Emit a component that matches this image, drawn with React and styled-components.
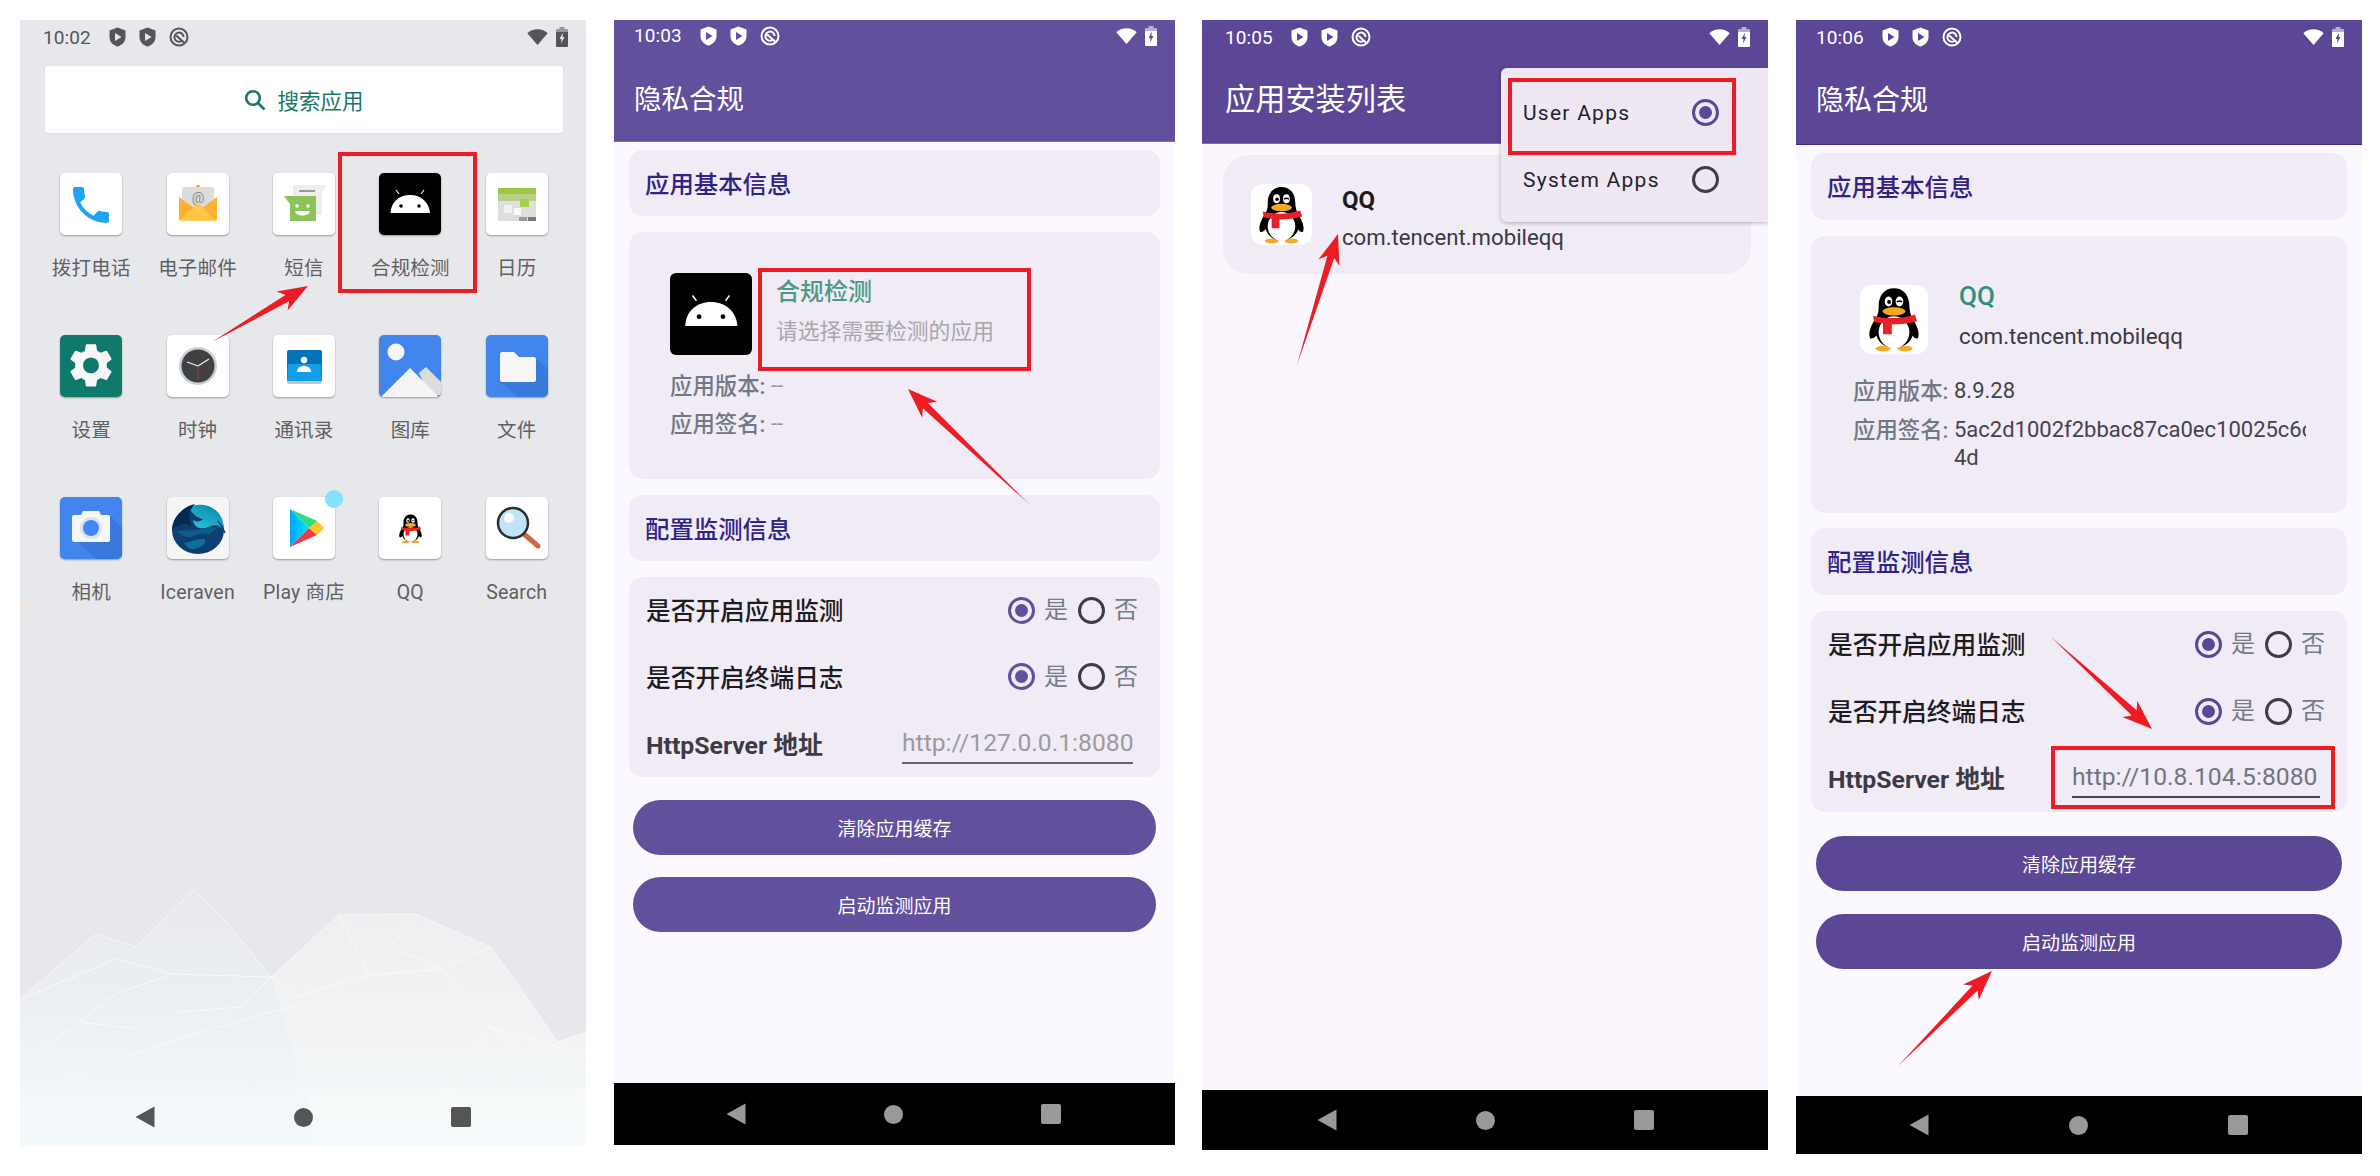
import React from "react";
import styled, { createGlobalStyle } from "styled-components";

const FONT = `Roboto, "Noto Sans CJK SC", sans-serif`;

const GlobalStyle = createGlobalStyle`
  html, body { margin: 0; padding: 0; background: #fff; }
  body { font-family: ${FONT}; }
`;

const Page = styled.div`
  position: relative;
  width: 2380px;
  height: 1176px;
  box-sizing: border-box;
  padding: 20px;
  display: flex;
  align-items: flex-start;
  overflow: hidden;
  background: #fff;
`;

const Phone = styled.div`
  position: relative;
  flex: none;
  width: ${(p) => p.$w}px;
  height: ${(p) => p.$h}px;
  margin-left: ${(p) => p.$gap || 0}px;
  background: ${(p) => p.$bg};
  display: flex;
  flex-direction: column;
  overflow: hidden;
`;

const Wallpaper = styled.svg`
  position: absolute;
  inset: 0;
`;

const Status = styled.div`
  position: relative;
  flex: none;
  height: ${(p) => p.$h}px;
  display: flex;
  align-items: center;
  padding: 0 18px 0 ${(p) => p.$left}px;
  color: ${(p) => p.$color};
`;

const Time = styled.span`
  font-size: 19px;
  letter-spacing: 0.1px;
  width: 66px;
`;

const StatusLeft = styled.div`
  display: flex;
  align-items: center;
  gap: 13px;
`;

const StatusRight = styled.div`
  margin-left: auto;
  display: flex;
  align-items: center;
  gap: 8px;
`;

const AppBar = styled.header`
  flex: none;
  height: ${(p) => p.$h}px;
  box-sizing: border-box;
  background: ${(p) => p.$bg};
  border-bottom: 1px solid ${(p) => p.$line};
  display: flex;
  flex-direction: column;
`;

const BarTitle = styled.div`
  flex: 1;
  display: flex;
  align-items: center;
  padding: ${(p) => p.$top}px 0 0 ${(p) => p.$left}px;
  color: #fff;
  font-size: ${(p) => p.$size}px;
  line-height: 1;
`;

const Body = styled.main`
  flex: 1;
  min-height: 0;
  display: flex;
  flex-direction: column;
  gap: ${(p) => p.$gap}px;
  padding: ${(p) => p.$top}px 15px 0;
  background: ${(p) => p.$bg};
`;

const Card = styled.section`
  flex: none;
  height: ${(p) => p.$h}px;
  box-sizing: border-box;
  background: #f0ebf5;
  border-radius: 14px;
`;

const HeadingCard = styled(Card)`
  display: flex;
  align-items: center;
  padding: 0 0 2px 16px;
  font-size: 24.4px;
  font-weight: 500;
  color: #2f2486;
`;

const InfoCard = styled(Card)`
  padding: ${(p) => p.$top}px 20px 0 ${(p) => p.$left}px;
`;

const AppRow = styled.div`
  display: flex;
  gap: ${(p) => p.$gap}px;
  margin-left: ${(p) => p.$inset}px;
`;

const AppIconBox = styled.div`
  flex: none;
  width: ${(p) => p.$w}px;
  height: ${(p) => p.$h}px;
  border-radius: ${(p) => p.$r || 8}px;
  overflow: hidden;
  background: ${(p) => p.$bg};
`;

const AppText = styled.div`
  display: flex;
  flex-direction: column;
  margin-top: ${(p) => p.$shift}px;
`;

const AppName = styled.div`
  height: 40px;
  display: flex;
  align-items: center;
  font-size: ${(p) => p.$size}px;
  font-weight: 500;
  color: ${(p) => p.$color};
`;

const AppSub = styled.div`
  height: 40px;
  display: flex;
  align-items: center;
  font-size: ${(p) => p.$size}px;
  color: ${(p) => p.$color};
`;

const MetaList = styled.div`
  display: flex;
  flex-direction: column;
  gap: ${(p) => p.$gap}px;
  margin-top: ${(p) => p.$top}px;
`;

const MetaRow = styled.div`
  display: flex;
  font-size: 22.4px;
  line-height: ${(p) => p.$line}px;
`;

const MetaLabel = styled.span`
  flex: none;
  width: ${(p) => p.$w}px;
  color: #6f7884;
  font-weight: 500;
`;

const MetaValue = styled.div`
  width: 352px;
  color: ${(p) => p.$color};
  font-size: 22px;
  overflow: hidden;
  white-space: nowrap;
`;

const Settings = styled(Card)`
  display: grid;
  grid-template-rows: repeat(3, 1fr);
  padding: 0 22px 0 17px;
`;

const SettingRow = styled.div`
  display: flex;
  align-items: center;
  justify-content: space-between;
`;

const SettingLabel = styled.span`
  padding-bottom: 2px;
  font-size: 24.7px;
  font-weight: 500;
  color: #1d1b20;
`;

const HttpLabel = styled.span`
  padding-bottom: 2px;
  font-size: 24.8px;
  font-weight: 700;
  color: #3d3a44;
`;

const RadioGroup = styled.div`
  display: flex;
  align-items: center;
`;

const Radio = styled.span`
  flex: none;
  width: 27px;
  height: 27px;
  box-sizing: border-box;
  border-radius: 50%;
  border: 3px solid ${(p) => (p.$on ? p.$tint : "#403c46")};
  display: flex;
  align-items: center;
  justify-content: center;
  &::after {
    content: "";
    width: 13px;
    height: 13px;
    border-radius: 50%;
    background: ${(p) => (p.$on ? p.$tint : "transparent")};
  }
`;

const RadioText = styled.span`
  font-size: 24px;
  line-height: 1;
  margin: 0 9.5px;
  color: #747c86;
  &:last-child { margin-right: 0; }
`;

const UrlField = styled.div`
  width: ${(p) => p.$w}px;
  height: 40px;
  margin-right: 5px;
  box-sizing: border-box;
  border-bottom: 2px solid ${(p) => p.$line};
  color: ${(p) => p.$color};
  font-size: 24.7px;
  line-height: 38px;
  white-space: nowrap;
`;

const Pill = styled.button`
  flex: none;
  height: 55px;
  margin: ${(p) => p.$top}px ${(p) => p.$inset}px 0;
  border: 0;
  border-radius: 28px;
  background: ${(p) => p.$bg};
  color: #fff;
  font-family: ${FONT};
  font-size: 19px;
`;

const NavBar = styled.nav`
  position: relative;
  flex: none;
  margin-top: auto;
  height: ${(p) => p.$h}px;
  box-sizing: border-box;
  padding: ${(p) => p.$pad};
  display: flex;
  align-items: center;
  justify-content: space-between;
  background: ${(p) => p.$bg};
`;

const NavDot = styled.span`
  width: 19px;
  height: 19px;
  border-radius: 50%;
  background: ${(p) => p.$color};
`;

const NavSquare = styled.span`
  width: 20px;
  height: 20px;
  border-radius: 2px;
  background: ${(p) => p.$color};
`;

/* launcher */
const SearchBar = styled.div`
  position: relative;
  flex: none;
  height: 67px;
  margin: 12px 23px 0 25px;
  border-radius: 2px;
  background: #fff;
  box-shadow: 0 0 1px rgba(0, 0, 0, 0.25);
  display: flex;
  align-items: center;
  justify-content: center;
  gap: 11px;
  color: #18796a;
  font-size: 21.5px;
`;

const AppGrid = styled.div`
  position: relative;
  margin: 40px 0 0 18px;
  display: grid;
  grid-template-columns: repeat(5, 106.4px);
  grid-auto-rows: 162px;
`;

const Launcher = styled.div`
  position: relative;
  display: flex;
  flex-direction: column;
  align-items: center;
`;

const Tile = styled.div`
  width: 62px;
  height: 62px;
  border-radius: 5px;
  overflow: hidden;
  background: ${(p) => p.$bg || "#fff"};
  box-shadow: 0 1px 2px rgba(0, 0, 0, 0.35);
`;

const TileLabel = styled.div`
  margin-top: 20px;
  font-size: 19.5px;
  letter-spacing: 0.2px;
  line-height: 28px;
  color: #5f6062;
  white-space: nowrap;
`;

const Badge = styled.span`
  position: absolute;
  top: -7px;
  right: 14px;
  width: 18px;
  height: 18px;
  border-radius: 50%;
  background: #85e1fb;
`;

/* installed apps screen */
const ListCard = styled.div`
  margin: 11px 17px 0 21px;
  height: 119px;
  box-sizing: border-box;
  border-radius: 26px;
  background: #f0ebf5;
  display: flex;
  align-items: flex-start;
  gap: 30px;
  padding: 29px 0 0 28px;
`;

const ListText = styled.div`
  display: flex;
  flex-direction: column;
`;

const ListName = styled.div`
  height: 32px;
  line-height: 32px;
  font-size: 24px;
  font-weight: 700;
  color: #1d1b20;
`;

const ListPackage = styled.div`
  margin-top: 3px;
  line-height: 36px;
  font-size: 22.2px;
  color: #3a3840;
`;

const Menu = styled.div`
  position: absolute;
  top: 48px;
  right: 0;
  width: 267px;
  height: 154px;
  box-sizing: border-box;
  padding: 11px 0 0 22px;
  border-radius: 6px 0 0 6px;
  background: #efe8f3;
  box-shadow: 0 1px 4px rgba(0, 0, 0, 0.28);
`;

const MenuItem = styled.div`
  height: 67px;
  display: flex;
  align-items: center;
  font-size: 21px;
  letter-spacing: 1.25px;
  color: #25232a;
`;

const MenuRadio = styled(Radio)`
  position: absolute;
  left: 191px;
`;

/* annotations */
const RedBox = styled.div`
  position: absolute;
  left: ${(p) => p.$x}px;
  top: ${(p) => p.$y}px;
  width: ${(p) => p.$w}px;
  height: ${(p) => p.$h}px;
  box-sizing: border-box;
  border: 4px solid #ed1c24;
`;

const ArrowLayer = styled.svg`
  position: absolute;
  inset: 0;
  pointer-events: none;
`;

function arrowPoints([tx, ty], [hx, hy]) {
  const len = Math.hypot(hx - tx, hy - ty);
  const ux = (hx - tx) / len;
  const uy = (hy - ty) / len;
  const nx = -uy;
  const ny = ux;
  const at = (back, side) => `${hx - ux * back + nx * side},${hy - uy * back + ny * side}`;
  return [
    `${tx},${ty}`,
    at(24, 3.6),
    at(30, 11),
    `${hx},${hy}`,
    at(30, -11),
    at(24, -3.6),
  ].join(" ");
}

const arrows = [
  [[212, 342], [308, 286]],
  [[1030, 505], [908, 389]],
  [[1297, 365], [1338, 234]],
  [[2051, 637], [2152, 729]],
  [[1898, 1066], [1992, 971]],
];

const ShieldIcon = ({ c }) => (
  <svg width="17" height="20" viewBox="0 0 17 20">
    <path
      fillRule="evenodd"
      fill={c}
      d="M8.5 0.5 16.5 3.5V10c0 4.6-3.3 8.2-8 9.5C3.8 18.2.5 14.6.5 10V3.5zM6 6v8l6.5-4z"
    />
  </svg>
);

const RingIcon = ({ c }) => (
  <svg width="20" height="20" viewBox="0 0 20 20" fill="none" stroke={c} strokeWidth="2">
    <circle cx="10" cy="10" r="8.5" />
    <path d="M13.5 13.2A4.6 4.6 0 1 1 14.6 10M7.2 8.6 15 15.6" />
  </svg>
);

const WifiIcon = ({ c }) => (
  <svg width="21" height="16" viewBox="0 0 21 16">
    <path fill={c} d="M10.5 16 .3 4.2C3 1.7 6.5.3 10.5.3s7.5 1.4 10.2 3.9z" />
  </svg>
);

const BatteryIcon = ({ c, cut }) => (
  <svg width="12" height="20" viewBox="0 0 12 20">
    <path fill={c} opacity="0.55" d="M3.5 0h5v2H11a1 1 0 0 1 1 1v3H0V3a1 1 0 0 1 1-1h2.5z" />
    <path fill={c} d="M0 5h12v14a1 1 0 0 1-1 1H1a1 1 0 0 1-1-1z" />
    <path fill={cut} d="M7 5.5 3.5 12H5.5L5 16.5l3.500-6.500H6.500z" />
  </svg>
);

const StatusBar = ({ time, color, cut, h, left }) => (
  <Status $h={h} $color={color} $left={left}>
    <Time>{time}</Time>
    <StatusLeft>
      <ShieldIcon c={color} />
      <ShieldIcon c={color} />
      <RingIcon c={color} />
    </StatusLeft>
    <StatusRight>
      <WifiIcon c={color} />
      <BatteryIcon c={color} cut={cut} />
    </StatusRight>
  </Status>
);

const Navigation = ({ h, bg, color, pad }) => (
  <NavBar $h={h} $bg={bg} $pad={pad}>
    <svg width="20" height="22" viewBox="0 0 20 22">
      <path fill={color} d="M19.5.5V21.5L.5 11z" />
    </svg>
    <NavDot $color={color} />
    <NavSquare $color={color} />
  </NavBar>
);

const AndroidArt = () => (
  <svg width="100%" height="100%" viewBox="0 0 62 60">
    <path d="M20 20 17 16M42 20 45 16" stroke="#fff" strokeWidth="1.1" />
    <path fill="#fff" d="M11.5 39C12 28 20 21 31 21s19 7 20 18z" />
    <circle cx="22" cy="32" r="1.8" fill="#000" />
    <circle cx="40" cy="32" r="1.8" fill="#000" />
  </svg>
);

const PenguinArt = ({ size = 62 }) => (
  <svg width={size} height={size} viewBox="0 0 62 62">
    <ellipse cx="21" cy="58" rx="7" ry="2.5" fill="#f7a823" />
    <ellipse cx="41" cy="58" rx="7" ry="2.5" fill="#f7a823" />
    <path
      fill="#000"
      d="M31 3c9 0 14 7 14 16 0 4 1 7 2 10 3 5 8 13 6 19-1 2-4 0-5-2-2 7-9 11-17 11s-14-4-16-11c-2 2-5 4-6 2-2-6 3-14 6-19 2-3 2-6 2-10 0-9 5-16 14-16z"
    />
    <ellipse cx="31" cy="43" rx="14" ry="14.5" fill="#fff" />
    <ellipse cx="26" cy="15" rx="3.5" ry="4.5" fill="#fff" />
    <ellipse cx="36" cy="15" rx="3.5" ry="4.5" fill="#fff" />
    <circle cx="26.5" cy="15.5" r="1.8" fill="#000" />
    <path d="M33.5 15.5q2.5-2 5 0" stroke="#000" strokeWidth="1.3" fill="none" />
    <ellipse cx="31" cy="24" rx="10.5" ry="3.8" fill="#f7a823" />
    <path fill="#e8202a" d="M12 28c10 3 28 3 38-1l2 6c-7 2-15 3-23 3v9h-8V35l-8-1z" />
  </svg>
);

const PhoneArt = () => (
  <svg width="62" height="62" viewBox="0 0 62 62">
    <g transform="translate(7 8) scale(2)">
      <path
        fill="#1ea4f2"
        d="M6.62 10.79c1.44 2.83 3.76 5.14 6.59 6.59l2.2-2.2c.27-.27.67-.36 1.02-.24 1.12.37 2.33.57 3.57.57.55 0 1 .45 1 1V20c0 .55-.45 1-1 1-9.39 0-17-7.61-17-17 0-.55.45-1 1-1h3.5c.55 0 1 .45 1 1 0 1.25.2 2.45.57 3.57.11.35.03.74-.25 1.02l-2.2 2.2z"
      />
    </g>
  </svg>
);

const MailArt = () => (
  <svg width="62" height="62" viewBox="0 0 62 62">
    <circle cx="31" cy="14" r="2" fill="#f59a23" />
    <rect x="15" y="14" width="32" height="22" rx="2" fill="#dcdcdc" />
    <text x="31" y="30" textAnchor="middle" fontSize="14" fill="#8a8a8a" fontFamily="Roboto">@</text>
    <path fill="#ffb02e" d="M12 24 31 38 50 24V47H12z" />
    <path fill="#ffc84d" d="M12 48 31 30 50 48z" opacity="0.9" />
  </svg>
);

const MessageArt = () => (
  <svg width="62" height="62" viewBox="0 0 62 62">
    <path fill="#ededed" d="M20 12H53L49 21V42H20z" />
    <rect x="26" y="17" width="16" height="2" fill="#9a9a9a" />
    <path fill="#8bc25a" d="M11 23H43V48H17V31z" />
    <circle cx="24" cy="33" r="1.8" fill="#fff" />
    <circle cx="35" cy="33" r="1.8" fill="#fff" />
    <path fill="#fff" d="M22 38H37C36 44 23 44 22 38z" />
  </svg>
);

const CalendarArt = () => (
  <svg width="62" height="62" viewBox="0 0 62 62">
    <rect x="12" y="15" width="38" height="33" fill="#dcdfdc" />
    <rect x="12" y="15" width="38" height="6" fill="#9cc73e" />
    <rect x="12" y="21" width="38" height="7" fill="#b9cf8a" />
    <rect x="18" y="32" width="8" height="8" fill="#f2f2f2" />
    <rect x="28" y="35" width="7" height="7" fill="#fafafa" />
    <rect x="34" y="26" width="9" height="8" fill="#a4cf4e" />
    <rect x="42" y="44" width="8" height="4" fill="#777" />
    <rect x="33" y="44" width="8" height="4" fill="#999" />
  </svg>
);

const GearArt = () => (
  <svg width="62" height="62" viewBox="0 0 62 62">
    <g transform="translate(4.6 4) scale(2.2)">
      <path
        fill="#f7f7f7"
        d="M19.14 12.94c.04-.3.06-.61.06-.94 0-.32-.02-.64-.07-.94l2.03-1.58c.18-.14.23-.41.12-.61l-1.92-3.32c-.12-.22-.37-.29-.59-.22l-2.39.96c-.5-.38-1.03-.7-1.62-.94l-.36-2.54c-.04-.24-.24-.41-.48-.41h-3.84c-.24 0-.43.17-.47.41l-.36 2.54c-.59.24-1.13.57-1.62.94l-2.39-.96c-.22-.08-.47 0-.59.22L2.74 8.87c-.12.21-.08.47.12.61l2.03 1.58c-.05.3-.09.63-.09.94s.02.64.07.94l-2.03 1.58c-.18.14-.23.41-.12.61l1.92 3.32c.12.22.37.29.59.22l2.39-.96c.5.38 1.03.7 1.62.94l.36 2.54c.05.24.24.41.48.41h3.84c.24 0 .44-.17.47-.41l.36-2.54c.59-.24 1.13-.56 1.62-.94l2.39.96c.22.08.47 0 .59-.22l1.92-3.32c.12-.22.07-.47-.12-.61l-2.01-1.58zM12 15.6c-1.98 0-3.6-1.62-3.6-3.6s1.62-3.6 3.6-3.6 3.6 1.62 3.6 3.6-1.62 3.6-3.6 3.6z"
      />
    </g>
  </svg>
);

const ClockArt = () => (
  <svg width="62" height="62" viewBox="0 0 62 62">
    <circle cx="31" cy="31" r="19" fill="#c9d0d6" />
    <circle cx="31" cy="31" r="16.5" fill="#3f4143" />
    <path d="M31 31 20 27M31 31 42 24" stroke="#f2f2f2" strokeWidth="1.2" />
    <path d="M31 31V45" stroke="#d33" strokeWidth="0.8" />
  </svg>
);

const ContactsArt = () => (
  <svg width="62" height="62" viewBox="0 0 62 62">
    <rect x="14" y="16" width="35" height="33" rx="2" fill="#9e9e9e" opacity="0.6" />
    <rect x="14" y="15" width="35" height="31" rx="2" fill="#0273bb" />
    <path fill="#119fe8" d="M15 29H48L49 46H14z" />
    <circle cx="31" cy="25" r="3.2" fill="#fff" />
    <path fill="#fff" d="M24 37c0-4 3-6 7-6s7 2 7 6z" />
  </svg>
);

const GalleryArt = () => (
  <svg width="62" height="62" viewBox="0 0 62 62">
    <path fill="#dcdcdc" d="M40 38 47 32 62 47V60H50z" />
    <path fill="#f5f5f5" d="M2 62 31 33 60 62z" />
    <circle cx="17" cy="17" r="8.5" fill="#f5f5f5" />
  </svg>
);

const FolderArt = () => (
  <svg width="62" height="62" viewBox="0 0 62 62">
    <path fill="#356fd0" opacity="0.55" d="M50 23 62 34V62H32L13 46z" />
    <path fill="#f6f6f6" d="M14 19a2 2 0 0 1 2-2h12l5 5h15a2 2 0 0 1 2 2v21a2 2 0 0 1-2 2H16a2 2 0 0 1-2-2z" />
  </svg>
);

const CameraArt = () => (
  <svg width="62" height="62" viewBox="0 0 62 62">
    <path fill="#356fd0" opacity="0.55" d="M51 20 62 30V62H36L12 40z" />
    <path fill="#f6f6f6" d="M12 20a2 2 0 0 1 2-2h7l2-4h16l2 4h7a2 2 0 0 1 2 2v23a2 2 0 0 1-2 2H14a2 2 0 0 1-2-2z" />
    <circle cx="31" cy="31" r="11" fill="#dfe3e8" />
    <circle cx="31" cy="31" r="8" fill="#4285f4" />
  </svg>
);

const IceravenArt = () => (
  <svg width="62" height="62" viewBox="0 0 62 62">
    <defs>
      <linearGradient id="iceTeal" x1="0.2" y1="0.9" x2="0.8" y2="0">
        <stop offset="0" stopColor="#25c1d6" />
        <stop offset="1" stopColor="#0d83ad" />
      </linearGradient>
    </defs>
    <ellipse cx="31" cy="33" rx="26" ry="24" fill="#0c3f70" />
    <path fill="url(#iceTeal)" d="M22 11C30 5 46 7 53 18c3 5 4 9 3 14-4-4-9-5-14-2-8 3-15 1-16-7 3 2 7 2 10-1-5-1-11-5-14-11z" />
    <path fill="#115a8c" d="M10 34c9-1 19 0 29-3 4-1 8-1 11 1-4 1-6 3-7 6-6-3-13-1-18 2-6 1-11-1-15-6z" />
    <path fill="#0d6d9b" d="M17 46c7-1 14-5 21-4 2 6-8 11-14 10-3-1-5-3-7-6z" />
    <path fill="#052a52" d="M5 33C6 22 14 10 28 7 22 13 20 21 25 29 17 26 10 27 5 33z" />
    <path d="M54 27 58 36M51 24 55 30" stroke="#0c3f70" strokeWidth="1.4" />
  </svg>
);

const PlayArt = () => (
  <svg width="62" height="62" viewBox="0 0 62 62">
    <defs>
      <linearGradient id="playBlue" x1="0" y1="0" x2="1" y2="0">
        <stop offset="0" stopColor="#00a6ff" />
        <stop offset="1" stopColor="#00e3ff" />
      </linearGradient>
    </defs>
    <path fill="url(#playBlue)" d="M17 12V50L36 31z" />
    <path fill="#30dc80" d="M17 12 36 31 44 24z" />
    <path fill="#ee3a44" d="M17 50 36 31 44 38z" />
    <path fill="#ffc42a" d="M36 31 44 24 51 31 44 38z" />
  </svg>
);

const SearchArt = () => (
  <svg width="62" height="62" viewBox="0 0 62 62">
    <path d="M38 37 52 49" stroke="#c96a42" strokeWidth="5" strokeLinecap="round" />
    <circle cx="27" cy="26" r="15" fill="#bfe4f8" stroke="#2c2c2c" strokeWidth="2.5" />
    <circle cx="23" cy="21" r="5" fill="#f4fbff" />
  </svg>
);

const QqTileArt = () => (
  <svg width="62" height="62" viewBox="0 0 62 62">
    <g transform="translate(16 16) scale(0.5)">
      <PenguinArt />
    </g>
  </svg>
);

const launcherApps = [
  { label: "拨打电话", art: <PhoneArt /> },
  { label: "电子邮件", art: <MailArt /> },
  { label: "短信", art: <MessageArt /> },
  { label: "合规检测", art: <AndroidArt />, bg: "#000" },
  { label: "日历", art: <CalendarArt /> },
  { label: "设置", art: <GearArt />, bg: "#0f7a6c" },
  { label: "时钟", art: <ClockArt /> },
  { label: "通讯录", art: <ContactsArt /> },
  { label: "图库", art: <GalleryArt />, bg: "#4285ec" },
  { label: "文件", art: <FolderArt />, bg: "#4285ec" },
  { label: "相机", art: <CameraArt />, bg: "#4285ec" },
  { label: "Iceraven", art: <IceravenArt />, bg: "#f5f5f5" },
  { label: "Play 商店", art: <PlayArt />, badge: true },
  { label: "QQ", art: <QqTileArt /> },
  { label: "Search", art: <SearchArt /> },
];

const sparks = [
  [5, 586, 6], [39, 548, 3], [200, 561, 4], [201, 596, 2], [12, 636, 3], [145, 626, 3],
  [170, 636, 2.5], [92, 652, 2.5], [66, 685, 2], [288, 667, 3], [293, 690, 2], [381, 610, 2],
  [497, 635, 2.5], [463, 584, 2.5], [544, 558, 2.5], [531, 508, 2], [350, 563, 2], [280, 544, 2],
  [28, 397, 5], [233, 322, 3],
];

const LauncherScreen = () => (
  <Phone $w={566} $h={1126} $bg="#e7e8eb">
    <Wallpaper width="566" height="1126" viewBox="0 0 566 1126">
      <defs>
        <linearGradient id="ridge" gradientUnits="userSpaceOnUse" x1="0" y1="870" x2="0" y2="1126">
          <stop offset="0" stopColor="#e8e9ec" />
          <stop offset="0.35" stopColor="#ebeef1" />
          <stop offset="0.7" stopColor="#eff4f7" />
          <stop offset="1" stopColor="#f1f8fb" />
        </linearGradient>
        <linearGradient id="warm" gradientUnits="userSpaceOnUse" x1="0" y1="895" x2="0" y2="1126">
          <stop offset="0" stopColor="#eeeff0" />
          <stop offset="0.6" stopColor="#f2f4f5" />
          <stop offset="1" stopColor="#f5fafc" />
        </linearGradient>
      </defs>
      {sparks.map(([x, y, r]) => (
        <circle key={`${x}-${y}`} cx={x} cy={y} r={r} fill="#f1e6dd" opacity="0.6" />
      ))}
      <path fill="url(#ridge)" d="M0 979 76 914 116 927 173 870 204 899 251 957 319 895 395 894 471 927 538 1022 566 1012V1126H0z" />
      <path fill="url(#warm)" d="M251 957 319 895 395 894 471 927 538 1022 566 1012V1126H300z" />
      <path
        fill="none"
        stroke="#fff"
        strokeWidth="1"
        opacity="0.6"
        d="M0 979 76 914 116 927 173 870 204 899 251 957 319 895 395 894 471 927 538 1022 566 1012M0 979 97 939 152 954 251 957 278 976 349 955 422 949 471 927M0 1044 60 1002 96 974 152 954M60 1002 119 1009M22 1036 52 1057 155 1020 220 1001 280 984M251 957 220 987 159 992M395 894 349 955M319 895 349 955M375 929 422 949 469 1007 538 1027 566 1034M469 1007 435 1067 390 1100M469 1007 566 1071"
      />
      <rect x="0" y="1069" width="566" height="57" fill="#fff" opacity="0.25" />
    </Wallpaper>
    <StatusBar time="10:02" color="#555559" cut="#e7e8eb" h={34} left={23} />
    <SearchBar>
      <svg width="22" height="22" viewBox="0 0 22 22" fill="none" stroke="#18796a" strokeWidth="2.6">
        <circle cx="9" cy="9" r="6.8" />
        <path d="M14 14 20.5 20.5" />
      </svg>
      搜索应用
    </SearchBar>
    <AppGrid>
      {launcherApps.map((app) => (
        <Launcher key={app.label}>
          <Tile $bg={app.bg}>{app.art}</Tile>
          {app.badge && <Badge />}
          <TileLabel>{app.label}</TileLabel>
        </Launcher>
      ))}
    </AppGrid>
    <Navigation h={58} bg="transparent" color="#555" pad="0 115px" />
  </Phone>
);

const ComplianceScreen = ({ m, time, name, sub, version, sign, url, nameColor, subColor, valueColor, art, iconBg }) => (
  <Phone $w={m.w} $h={m.h} $gap={m.gap} $bg={m.bodyBg}>
    <AppBar $h={m.bar} $bg={m.tint} $line={m.line}>
      <StatusBar time={time} color="#fff" cut={m.tint} h={m.status} left={20} />
      <BarTitle $top={m.titleTop} $left={m.titleLeft} $size={m.titleSize}>隐私合规</BarTitle>
    </AppBar>
    <Body $gap={m.cardGap} $top={m.bodyTop} $bg={m.bodyBg}>
      <HeadingCard $h={m.heading}>应用基本信息</HeadingCard>
      <InfoCard $h={m.info} $top={m.infoTop} $left={m.infoLeft}>
        <AppRow $gap={m.iconGap} $inset={m.iconInset}>
          <AppIconBox $w={m.iconW} $h={m.iconH} $bg={iconBg} $r={m.iconR}>{art}</AppIconBox>
          <AppText $shift={m.textShift}>
            <AppName $size={m.nameSize} $color={nameColor}>{name}</AppName>
            <AppSub $size={m.subSize} $color={subColor}>{sub}</AppSub>
          </AppText>
        </AppRow>
        <MetaList $top={m.metaTop} $gap={m.signGap}>
          <MetaRow $line={38}>
            <MetaLabel $w={m.metaW}>应用版本:</MetaLabel>
            <MetaValue $color={valueColor}>{version}</MetaValue>
          </MetaRow>
          <MetaRow $line={m.signLine}>
            <MetaLabel $w={m.metaW}>应用签名:</MetaLabel>
            <MetaValue $color={valueColor}>
              {sign.map((part) => (
                <div key={part}>{part}</div>
              ))}
            </MetaValue>
          </MetaRow>
        </MetaList>
      </InfoCard>
      <HeadingCard $h={m.heading}>配置监测信息</HeadingCard>
      <Settings $h={m.settings}>
        {["是否开启应用监测", "是否开启终端日志"].map((label) => (
          <SettingRow key={label}>
            <SettingLabel>{label}</SettingLabel>
            <RadioGroup>
              <Radio $on $tint={m.tint} />
              <RadioText>是</RadioText>
              <Radio />
              <RadioText>否</RadioText>
            </RadioGroup>
          </SettingRow>
        ))}
        <SettingRow>
          <HttpLabel>HttpServer 地址</HttpLabel>
          <UrlField $w={m.urlW} $line={m.urlLine} $color={m.urlColor}>{url}</UrlField>
        </SettingRow>
      </Settings>
      <Pill $bg={m.tint} $top={m.pillTop} $inset={m.pillInset}>清除应用缓存</Pill>
      <Pill $bg={m.tint} $top={m.pillGap} $inset={m.pillInset}>启动监测应用</Pill>
    </Body>
    <Navigation h={m.nav} bg="#000" color="#999" pad={m.navPad} />
  </Phone>
);

const first = {
  w: 561, h: 1125, gap: 28, tint: "#62509c", line: "#7e6fb0", bodyBg: "#fcf8ff", bar: 122, status: 31,
  titleTop: 7, titleLeft: 20, titleSize: 27.5, cardGap: 16, bodyTop: 8, heading: 66, info: 247, infoTop: 41, infoLeft: 41,
  iconGap: 24, iconInset: 0, iconW: 82, iconH: 82, iconR: 6, textShift: -4, nameSize: 24, subSize: 21.8, metaTop: 12, metaW: 101,
  signGap: 0, signLine: 38, settings: 200, urlW: 231, urlLine: "#67626f", urlColor: "#9b9a9f", pillTop: 7, pillGap: 6,
  pillInset: 4, nav: 62, navPad: "0 114px 0 112px",
};

const second = {
  w: 566, h: 1134, gap: 28, tint: "#5b4795", line: "#3b2c8c", bodyBg: "#fcf8ff", bar: 125, status: 34,
  titleTop: 3, titleLeft: 20, titleSize: 28, cardGap: 15.5, bodyTop: 8, heading: 67, info: 277, infoTop: 49, infoLeft: 42,
  iconGap: 31, iconInset: 7, iconW: 68, iconH: 69, iconR: 12, textShift: -9, nameSize: 26, subSize: 22.4, metaTop: 16, metaW: 101,
  signGap: 6, signLine: 28, settings: 201, urlW: 248, urlLine: "#47434f", urlColor: "#71757d", pillTop: 9, pillGap: 7.5,
  pillInset: 5, nav: 58, navPad: "0 114px 0 113px",
};

const AppListScreen = () => (
  <Phone $w={566} $h={1130} $gap={27} $bg="#fbf6fe">
    <AppBar $h={124} $bg="#5b4795" $line="#8070ac">
      <StatusBar time="10:05" color="#fff" cut="#5b4795" h={34} left={23} />
      <BarTitle $top={3} $left={23} $size={30.2}>应用安装列表</BarTitle>
    </AppBar>
    <ListCard>
      <AppIconBox $w={61} $h={61} $bg="#fff" $r={12}>
        <PenguinArt size={61} />
      </AppIconBox>
      <ListText>
        <ListName>QQ</ListName>
        <ListPackage>com.tencent.mobileqq</ListPackage>
      </ListText>
    </ListCard>
    <Menu>
      <MenuItem>User Apps<MenuRadio $on $tint="#5b4795" /></MenuItem>
      <MenuItem>System Apps<MenuRadio /></MenuItem>
    </Menu>
    <Navigation h={60} bg="#000" color="#999" pad="0 114px 0 115px" />
  </Phone>
);

export default function App() {
  return (
    <Page>
      <GlobalStyle />
      <LauncherScreen />
      <ComplianceScreen
        m={first}
        time="10:03"
        name="合规检测"
        sub="请选择需要检测的应用"
        version="--"
        sign={["--"]}
        url="http://127.0.0.1:8080"
        nameColor="#4b9a86"
        subColor="#a9a6ac"
        valueColor="#96969c"
        iconBg="#000"
        art={<AndroidArt />}
      />
      <AppListScreen />
      <ComplianceScreen
        m={second}
        time="10:06"
        name="QQ"
        sub="com.tencent.mobileqq"
        version="8.9.28"
        sign={["5ac2d1002f2bbac87ca0ec10025c6c", "4d"]}
        url="http://10.8.104.5:8080"
        nameColor="#2e8f7e"
        subColor="#3a3840"
        valueColor="#45424c"
        iconBg="#fff"
        art={<PenguinArt size={68} />}
      />
      <RedBox $x={338} $y={152} $w={139} $h={141} />
      <RedBox $x={758} $y={268} $w={273} $h={103} />
      <RedBox $x={1508} $y={78} $w={228} $h={77} />
      <RedBox $x={2051} $y={746} $w={284} $h={63} />
      <ArrowLayer width="2380" height="1176" viewBox="0 0 2380 1176">
        {arrows.map(([tail, tip]) => (
          <polygon key={tip.join()} points={arrowPoints(tail, tip)} fill="#ed1c24" />
        ))}
      </ArrowLayer>
    </Page>
  );
}
